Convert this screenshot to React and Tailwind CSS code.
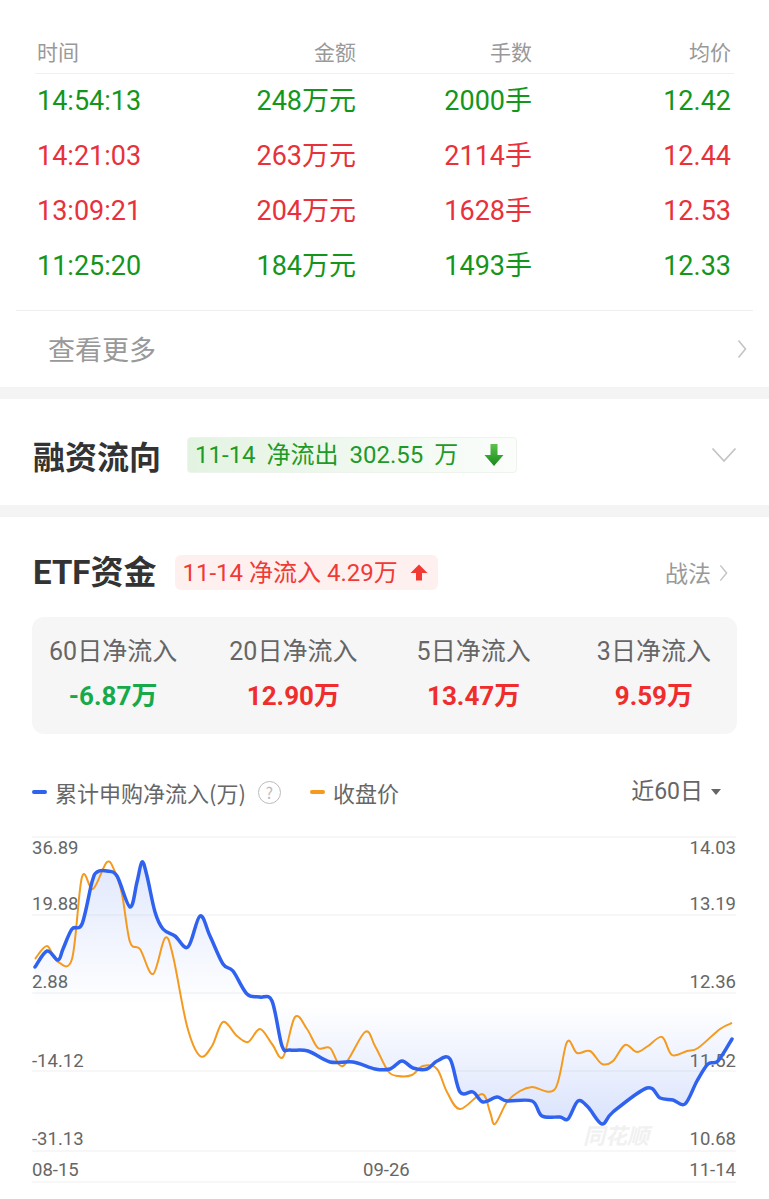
const deals = [
  { time: '14:54:13', amount: '248万元', lots: '2000手', price: '12.42', up: false },
  { time: '14:21:03', amount: '263万元', lots: '2114手', price: '12.44', up: true },
  { time: '13:09:21', amount: '204万元', lots: '1628手', price: '12.53', up: true },
  { time: '11:25:20', amount: '184万元', lots: '1493手', price: '12.33', up: false },
]

const stats = [
  { label: '60日净流入', value: '-6.87万', up: false },
  { label: '20日净流入', value: '12.90万', up: true },
  { label: '5日净流入', value: '13.47万', up: true },
  { label: '3日净流入', value: '9.59万', up: true },
]

const bluePts = [
  [35, 968], [47, 952], [58, 961], [63, 950], [72, 930], [82, 925], [92, 883], [97, 873],
  [107, 872], [117, 877], [130, 908], [137, 883], [142, 863], [147, 877], [155, 913],
  [163, 930], [175, 937], [188, 948], [200, 917], [210, 937], [223, 965], [233, 972],
  [247, 995], [260, 998], [272, 1002], [282, 1047], [290, 1051], [308, 1052], [330, 1063],
  [353, 1063], [375, 1070], [390, 1070], [402, 1062], [413, 1069], [427, 1070], [437, 1062],
  [450, 1060], [460, 1093], [473, 1093], [483, 1103], [497, 1098], [507, 1102], [532, 1102],
  [542, 1117], [560, 1118], [568, 1120], [578, 1102], [588, 1108], [602, 1125], [613, 1113],
  [647, 1089], [660, 1099], [673, 1101], [685, 1105], [697, 1082], [708, 1065], [718, 1062],
  [732, 1040],
]

const orangePts = [
  [35, 960], [47, 947], [57, 962], [72, 960], [82, 878], [93, 890], [107, 863], [115, 873],
  [122, 895], [130, 943], [140, 950], [153, 975], [165, 939], [173, 957], [187, 1027],
  [200, 1057], [212, 1047], [223, 1023], [237, 1037], [248, 1043], [260, 1030], [272, 1045],
  [283, 1058], [295, 1018], [307, 1030], [318, 1049], [330, 1049], [343, 1067], [365, 1033],
  [375, 1047], [388, 1072], [398, 1077], [412, 1076], [423, 1067], [437, 1070], [447, 1093],
  [460, 1110], [482, 1095], [490, 1113], [495, 1125], [507, 1103], [520, 1092], [532, 1088],
  [555, 1090], [567, 1043], [577, 1054], [590, 1052], [602, 1065], [613, 1062], [625, 1046],
  [637, 1053], [648, 1047], [662, 1038], [672, 1056], [687, 1052], [698, 1049], [720, 1030],
  [732, 1024],
]

// catmull-rom -> cubic bezier
function smooth(pts) {
  let d = `M${pts[0][0]},${pts[0][1]}`
  for (let i = 0; i < pts.length - 1; i++) {
    const p0 = pts[i - 1] || pts[i]
    const p1 = pts[i]
    const p2 = pts[i + 1]
    const p3 = pts[i + 2] || p2
    const c1x = p1[0] + (p2[0] - p0[0]) / 6
    const c1y = p1[1] + (p2[1] - p0[1]) / 6
    const c2x = p2[0] - (p3[0] - p1[0]) / 6
    const c2y = p2[1] - (p3[1] - p1[1]) / 6
    d += ` C${c1x},${c1y} ${c2x},${c2y} ${p2[0]},${p2[1]}`
  }
  return d
}

const numFont = "font-['Roboto','Noto_Sans_CJK_SC',sans-serif]"

function ChevronRight({ className }) {
  return (
    <svg viewBox="0 0 10 20" className={className} fill="none" stroke="currentColor" strokeWidth="1.6">
      <path d="M1.5 1.5 L8.5 10 L1.5 18.5" />
    </svg>
  )
}

function ArrowDown() {
  return (
    <svg viewBox="0 0 20 24" className="w-[20px] h-[24px]">
      <defs>
        <linearGradient id="gdown" x1="0" y1="0" x2="0" y2="1">
          <stop offset="0" stopColor="#5cc24c" />
          <stop offset="1" stopColor="#178a1c" />
        </linearGradient>
      </defs>
      <path d="M6.5 1 H13.5 V12 H19.5 L10 23 L0.5 12 H6.5 Z" fill="url(#gdown)" />
    </svg>
  )
}

function ArrowUp() {
  return (
    <svg viewBox="0 0 18 17" className="w-[18px] h-[17px]">
      <path d="M9 0.5 L17.5 9 H12 V16.5 H6 V9 H0.5 Z" fill="#f23a32" />
    </svg>
  )
}

function Chart() {
  const blue = smooth(bluePts)
  const area = `${blue} L732,1007 L35,1007 Z`
  const grid = [838, 916, 994, 1072, 1152]
  const left = [
    ['36.89', 855],
    ['19.88', 911],
    ['2.88', 989],
    ['-14.12', 1068],
    ['-31.13', 1146],
  ]
  const right = [
    ['14.03', 855],
    ['13.19', 911],
    ['12.36', 989],
    ['11.52', 1068],
    ['10.68', 1146],
  ]
  return (
    <svg viewBox="0 820 769 379" className="block w-[769px] h-[379px]">
      <defs>
        <linearGradient id="area" gradientUnits="userSpaceOnUse" x1="0" y1="850" x2="0" y2="1130">
          <stop offset="0" stopColor="#3b6cf0" stopOpacity="0.17" />
          <stop offset="0.56" stopColor="#3b6cf0" stopOpacity="0" />
          <stop offset="1" stopColor="#3b6cf0" stopOpacity="0.2" />
        </linearGradient>
      </defs>
      {grid.map((y) => (
        <line key={y} x1="32" x2="736" y1={y} y2={y} stroke="#efefef" strokeWidth="1" />
      ))}
      <line x1="32" x2="736" y1="1183" y2="1183" stroke="#efefef" strokeWidth="1" />
      <g fontFamily="Roboto, sans-serif" fontSize="18.5" fill="#666">
        {left.map(([t, y]) => (
          <text key={t} x="32" y={y}>{t}</text>
        ))}
        {right.map(([t, y]) => (
          <text key={t} x="736" y={y} textAnchor="end">{t}</text>
        ))}
        <text x="32" y="1177">08-15</text>
        <text x="363" y="1177">09-26</text>
        <text x="736" y="1177" textAnchor="end">11-14</text>
      </g>
      <text x="583" y="1145" fontFamily="'Noto Sans CJK SC', sans-serif" fontSize="22" fontWeight="700" fontStyle="italic" fill="#f1f1f1">同花顺</text>
      <path d={area} fill="url(#area)" />
      <path d={smooth(orangePts)} fill="none" stroke="#f49a1e" strokeWidth="2" strokeLinejoin="round" />
      <path d={blue} fill="none" stroke="#2f62ee" strokeWidth="3.5" strokeLinejoin="round" strokeLinecap="round" />
    </svg>
  )
}

export default function App() {
  return (
    <div className="w-[769px] h-[1199px] overflow-hidden bg-white font-['Noto_Sans_CJK_SC',sans-serif]">
      {/* deals */}
      <div className="bg-white">
        <div className="pt-[30px] px-[35px]">
          <div className="grid grid-cols-[165px_154px_176px_1fr] h-[44px] items-center border-b border-[#f0f0f0] pl-[2px] pr-[3px] text-[21px] text-[#999]">
            <span>时间</span>
            <span className="text-right">金额</span>
            <span className="text-right">手数</span>
            <span className="text-right">均价</span>
          </div>
          {deals.map((d) => (
            <div
              key={d.time}
              className={`grid grid-cols-[165px_154px_176px_1fr] h-[55px] items-center pl-[2px] pr-[3px] text-[27px] ${numFont} ${
                d.up ? 'text-[#e8313a]' : 'text-[#14961c]'
              }`}
            >
              <span>{d.time}</span>
              <span className="text-right">{d.amount}</span>
              <span className="text-right">{d.lots}</span>
              <span className="text-right">{d.price}</span>
            </div>
          ))}
        </div>
        <div className="mt-[16px] mx-[16px] border-t border-[#eeeeee] h-[77px] flex items-center justify-between pl-[32px] pr-[6px]">
          <span className="text-[27px] text-[#999]">查看更多</span>
          <ChevronRight className="w-[10px] h-[20px] text-[#c4c4c4]" />
        </div>
      </div>

      <div className="h-[12px] bg-[#f4f4f4]" />

      {/* margin flow */}
      <div className="h-[106px] pt-[6px] flex items-center justify-between pl-[33px] pr-[32px]">
        <div className="flex items-center gap-[26px]">
          <span className="text-[32px] font-bold text-[#333]">融资流向</span>
          <div className="flex items-center h-[36px] w-[330px] pl-[7px] pr-[12px] justify-between rounded-[4px] border border-[#eef3ee] bg-gradient-to-r from-[#e3f3e2] to-[#fbfdfb]">
            <span className={`text-[24px] text-[#1e9a28] whitespace-pre [word-spacing:5px] ${numFont}`}>11-14 净流出 302.55 万</span>
            <ArrowDown />
          </div>
        </div>
        <svg viewBox="0 0 26 16" className="w-[26px] h-[16px]" fill="none" stroke="#c4c4c4" strokeWidth="1.8">
          <path d="M1.5 1.5 L13 14 L24.5 1.5" />
        </svg>
      </div>

      <div className="h-[12px] bg-[#f4f4f4]" />

      {/* ETF */}
      <div className="pt-[38px]">
        <div className="flex items-center justify-between h-[35px] pl-[33px] pr-[41px]">
          <div className="flex items-center gap-[19px]">
            <span className={`text-[33px] font-bold text-[#333] ${numFont}`}>ETF资金</span>
            <div className="flex items-center gap-[12px] h-[35px] pl-[7px] pr-[10px] rounded-[6px] bg-[#fff0f0]">
              <span className={`text-[24px] text-[#f03a36] ${numFont}`}>11-14 净流入 4.29万</span>
              <ArrowUp />
            </div>
          </div>
          <div className="flex items-center gap-[8px] text-[#999]">
            <span className="text-[23px]">战法</span>
            <ChevronRight className="w-[9px] h-[18px] text-[#c4c4c4]" />
          </div>
        </div>

        <div className="mt-[27px] mx-[32px] h-[117px] rounded-[12px] bg-[#f6f6f6] pt-[21px]">
          <div className="grid grid-cols-4 w-[721px] ml-[-9px]">
            {stats.map((s) => (
              <div key={s.label} className="flex flex-col items-center gap-[15px]">
                <span className={`text-[25px] leading-[28px] text-[#666] ${numFont}`}>{s.label}</span>
                <span
                  className={`text-[26px] leading-[30px] font-bold ${numFont} ${
                    s.up ? 'text-[#ef2d2d]' : 'text-[#17a94a]'
                  }`}
                >
                  {s.value}
                </span>
              </div>
            ))}
          </div>
        </div>

        <div className="mt-[43px] h-[30px] flex items-center justify-between pl-[32px] pr-[48px]">
          <div className="flex items-center text-[22px] text-[#666]">
            <span className="w-[15px] h-[4px] rounded-full bg-[#2f62ee] mr-[8px]" />
            <span>累计申购净流入(万)</span>
            <span className="ml-[12px] w-[23px] h-[23px] rounded-full border border-[#bbb] text-[16px] leading-none text-[#bbb] flex items-center justify-center">?</span>
            <span className="ml-[29px] w-[15px] h-[4px] rounded-full bg-[#f49a1e] mr-[8px]" />
            <span>收盘价</span>
          </div>
          <div className={`flex items-center gap-[8px] text-[23px] text-[#666] ${numFont}`}>
            <span>近60日</span>
            <svg viewBox="0 0 10 7" className="w-[10px] h-[7px]">
              <path d="M0 0 H10 L5 6 Z" fill="#666" />
            </svg>
          </div>
        </div>

        <div className="mt-[12px]">
          <Chart />
        </div>
      </div>
    </div>
  )
}
